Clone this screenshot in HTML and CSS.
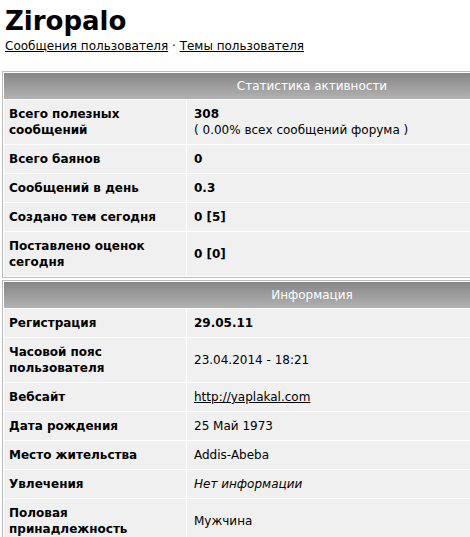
FILE: index.html
```html
<!DOCTYPE html>
<html>
<head>
  <title>Ziropalo</title>
  <link rel="stylesheet" href="styles.css">
</head>
<body>

  <div class="page">
    <h1 class="user-name">Ziropalo</h1>
    <div class="user-links">
      <a href="#">Сообщения пользователя</a> &middot; <a href="#">Темы пользователя</a>
    </div>

    <table class="profile-table">
      <tr>
        <th colspan="2">Статистика активности</th>
      </tr>
      <tr>
        <td class="label">Всего полезных сообщений</td>
        <td><b>308</b><br>( 0.00% всех сообщений форума )</td>
      </tr>
      <tr>
        <td class="label">Всего баянов</td>
        <td><b>0</b></td>
      </tr>
      <tr>
        <td class="label">Сообщений в день</td>
        <td><b>0.3</b></td>
      </tr>
      <tr>
        <td class="label">Создано тем сегодня</td>
        <td><b>0 [5]</b></td>
      </tr>
      <tr>
        <td class="label">Поставлено оценок сегодня</td>
        <td><b>0 [0]</b></td>
      </tr>
    </table>

    <table class="profile-table">
      <tr>
        <th colspan="2">Информация</th>
      </tr>
      <tr>
        <td class="label">Регистрация</td>
        <td><b>29.05.11</b></td>
      </tr>
      <tr>
        <td class="label">Часовой пояс пользователя</td>
        <td>23.04.2014 - 18:21</td>
      </tr>
      <tr>
        <td class="label">Вебсайт</td>
        <td><a href="#">http://yaplakal.com</a></td>
      </tr>
      <tr>
        <td class="label">Дата рождения</td>
        <td>25 Май 1973</td>
      </tr>
      <tr>
        <td class="label">Место жительства</td>
        <td>Addis-Abeba</td>
      </tr>
      <tr>
        <td class="label">Увлечения</td>
        <td><i>Нет информации</i></td>
      </tr>
      <tr>
        <td class="label">Половая принадлежность</td>
        <td>Мужчина</td>
      </tr>
    </table>
  </div>

</body>
</html>
```

FILE: styles.css
```css
body {
  font-family: "DejaVu Sans", Verdana, sans-serif;
  font-size: 12px;
  background-color: #fff;
  color: #000;
  margin: 0;
  padding: 0;
  overflow: hidden;
}

.page {
  padding: 4px 2px;
  width: 620px;
}

a {
  color: #000;
}

.user-name {
  font-size: 26px;
  margin: 0 0 0 3px;
  line-height: 34px;
}

.user-links {
  margin: 0 0 0 3px;
  line-height: 16px;
}

.profile-table {
  width: 620px;
  border: 1px solid #bbb;
  border-spacing: 1px;
  background-color: #fff;
  margin-top: 17px;
}

.profile-table + .profile-table {
  margin-top: 2px;
}

.profile-table th {
  background: linear-gradient(#868686, #b2b2b2);
  color: #fff;
  font-weight: normal;
  height: 26px;
  padding: 0;
  text-align: center;
}

.profile-table td {
  background-color: #f0f0f0;
  padding: 6px 7px;
  line-height: 16px;
  vertical-align: middle;
}

.profile-table td.label {
  width: 170px;
  padding-left: 5px;
  font-weight: bold;
}
```
